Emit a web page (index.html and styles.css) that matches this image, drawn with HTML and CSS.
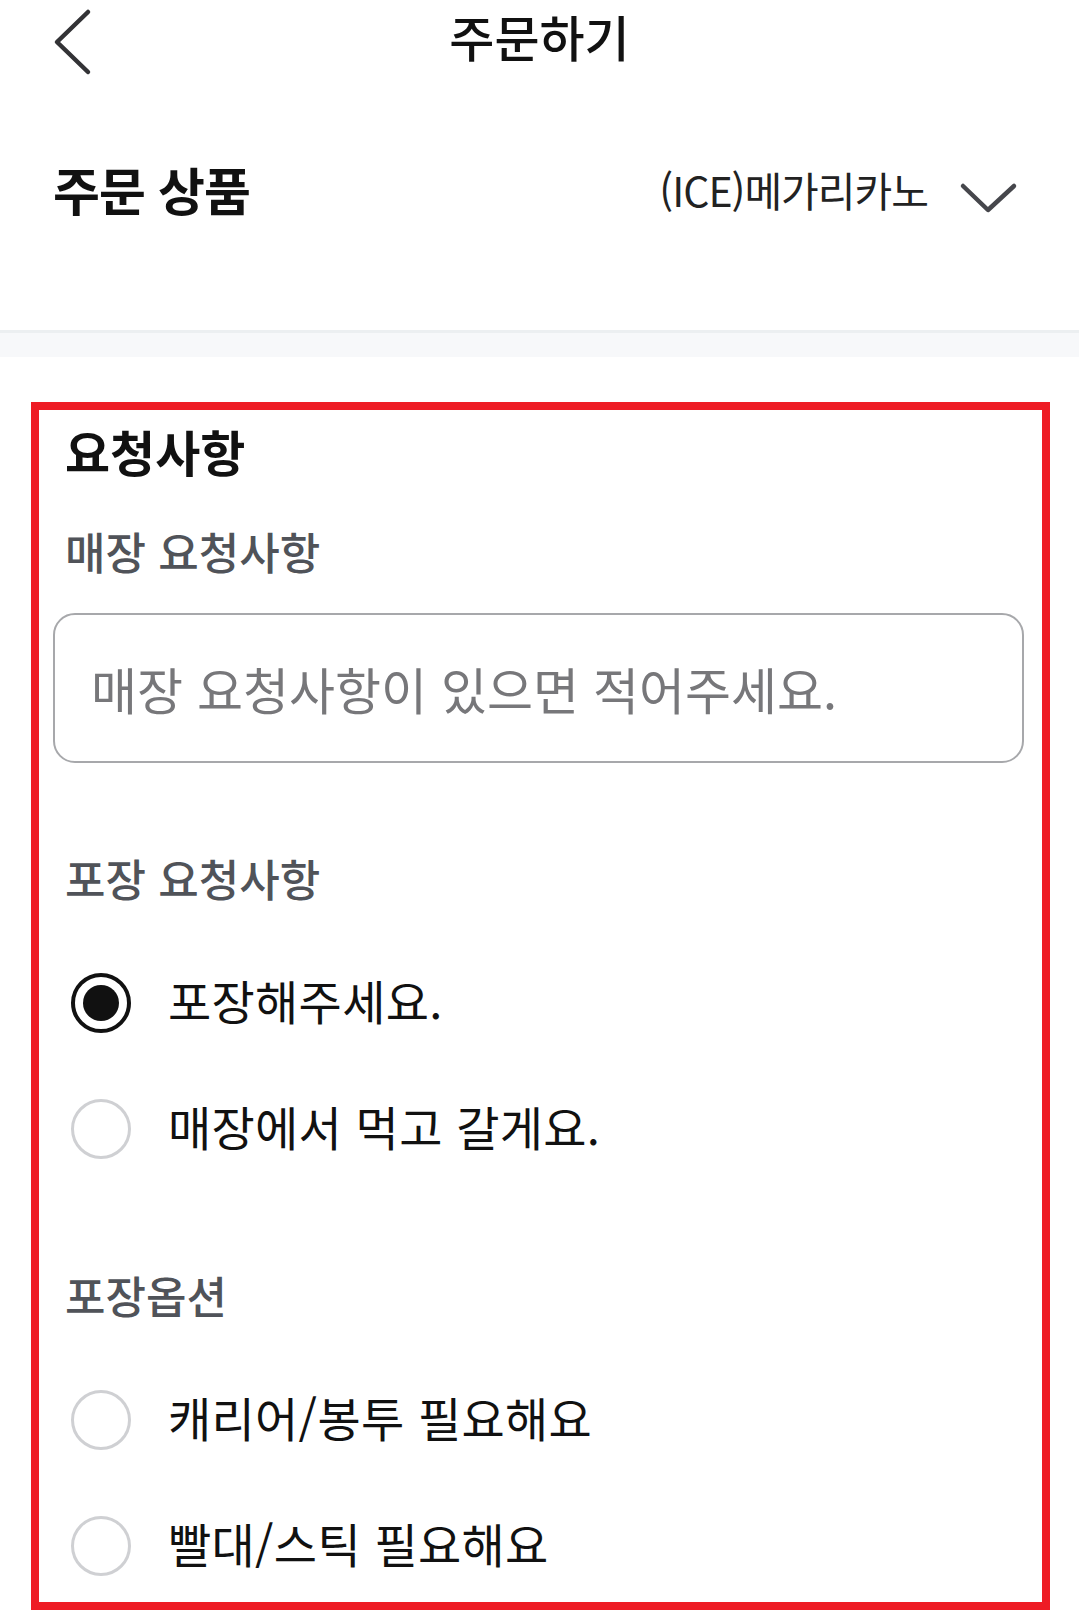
FILE: index.html
```html
<!DOCTYPE html>
<html lang="ko">
<head>
<meta charset="utf-8">
<title>주문하기</title>
<link rel="stylesheet" href="styles.css">
</head>
<body>
<header class="topbar">
  <div class="topbar-left">
    <svg class="back-icon" width="44" height="84" viewBox="0 0 44 84" aria-hidden="true">
      <path d="M40 12 L9 42 L40 72" fill="none" stroke="#333336" stroke-width="4.5" stroke-linecap="round" stroke-linejoin="round"/>
    </svg>
  </div>
  <h1 class="topbar-title">주문하기</h1>
  <div class="topbar-right"></div>
</header>

<section class="product-row">
  <h2 class="product-label">주문 상품</h2>
  <div class="product-select">
    <span class="product-name">(ICE)메가리카노</span>
    <svg class="chevron-down" width="60" height="40" viewBox="0 0 60 40" aria-hidden="true">
      <path d="M5 8 L30 32 L56 8" fill="none" stroke="#46474c" stroke-width="4.5" stroke-linecap="round" stroke-linejoin="round"/>
    </svg>
  </div>
</section>

<div class="divider-band"></div>

<section class="request-box">
  <h2 class="box-title">요청사항</h2>

  <h3 class="field-label">매장 요청사항</h3>
  <div class="text-input">
    <span class="placeholder">매장 요청사항이 있으면 적어주세요.</span>
  </div>

  <h3 class="field-label label-pack">포장 요청사항</h3>
  <div class="option-list">
    <div class="option">
      <span class="radio radio-checked"><span class="radio-dot"></span></span>
      <span class="option-text">포장해주세요.</span>
    </div>
    <div class="option">
      <span class="radio"></span>
      <span class="option-text">매장에서 먹고 갈게요.</span>
    </div>
  </div>

  <h3 class="field-label label-options">포장옵션</h3>
  <div class="option-list">
    <div class="option">
      <span class="radio"></span>
      <span class="option-text">캐리어/봉투 필요해요</span>
    </div>
    <div class="option">
      <span class="radio"></span>
      <span class="option-text">빨대/스틱 필요해요</span>
    </div>
  </div>
</section>
</body>
</html>
```

FILE: styles.css
```css
* {
  box-sizing: border-box;
}

html, body {
  margin: 0;
  padding: 0;
  background: #ffffff;
}

body {
  font-family: "Noto Sans CJK KR", "Noto Sans", sans-serif;
  color: #111111;
  width: 1079px;
}

h1, h2, h3 {
  margin: 0;
  font-weight: normal;
}

/* Top bar */
.topbar {
  display: grid;
  grid-template-columns: 1fr auto 1fr;
  height: 84px;
  align-items: start;
}

.topbar-left {
  padding-left: 48px;
  height: 84px;
}

.back-icon {
  display: block;
}

.topbar-title {
  font-size: 49px;
  line-height: 72px;
  font-weight: 500;
  color: #111111;
}

/* Product row */
.product-row {
  display: flex;
  align-items: center;
  justify-content: space-between;
  height: 210px;
  padding: 0 61px 0 53px;
}

.product-label {
  font-size: 51px;
  line-height: 60px;
  font-weight: 700;
  color: #111111;
  letter-spacing: -1px;
}

.product-select {
  display: flex;
  align-items: center;
  gap: 30px;
}

.product-name {
  font-size: 41px;
  line-height: 60px;
  color: #222222;
  letter-spacing: -1px;
}

.chevron-down {
  display: block;
  margin-top: 18px;
}

.divider-band {
  margin-top: 36px;
  height: 27px;
  background: #f7f8fa;
  border-top: 3px solid #eceff1;
}

/* Request box */
.request-box {
  margin: 45px 29px 2px 31px;
  border: 8px solid #ee1c25;
  padding: 11px 18px 16px 14px;
}

.box-title {
  font-size: 49px;
  line-height: 60px;
  font-weight: 700;
  color: #111111;
  padding-left: 12px;
}

.field-label {
  margin-top: 40px;
  font-size: 44px;
  line-height: 60px;
  font-weight: 500;
  color: #505359;
  padding-left: 12px;
}

.text-input {
  margin-top: 32px;
  height: 150px;
  border: 2px solid #a7a8ab;
  border-radius: 22px;
  display: flex;
  align-items: center;
  padding-left: 36px;
}

.placeholder {
  font-size: 50px;
  line-height: 60px;
  color: #77777a;
}

.label-pack {
  margin-top: 85px;
}

.label-options {
  margin-top: 96px;
}

.option-list {
  margin-top: 55px;
  display: flex;
  flex-direction: column;
  gap: 46px;
}

.option {
  display: flex;
  align-items: center;
  height: 80px;
  padding-left: 18px;
  gap: 37px;
}

.radio {
  width: 60px;
  height: 60px;
  border-radius: 50%;
  border: 3px solid #cfd0d3;
  display: flex;
  align-items: center;
  justify-content: center;
  flex: none;
}

.radio-checked {
  border: 4px solid #111111;
}

.radio-dot {
  width: 36px;
  height: 36px;
  border-radius: 50%;
  background: #111111;
}

.option-text {
  font-size: 47px;
  line-height: 60px;
  padding-bottom: 6px;
  color: #111111;
  letter-spacing: 0.3px;
}
```
